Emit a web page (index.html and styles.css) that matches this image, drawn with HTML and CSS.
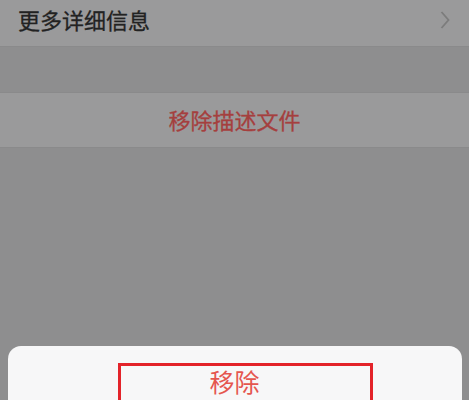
FILE: index.html
```html
<!DOCTYPE html>
<html lang="zh">
<head>
<meta charset="utf-8">
<link rel="stylesheet" href="styles.css">
</head>
<body>
<div class="page">
  <div class="row info">
    <span class="label">更多详细信息</span>
    <svg class="chev" width="10" height="20" viewBox="0 0 10 20"><polyline points="1.5,2 8.5,10 1.5,18" fill="none" stroke="#7c7c7c" stroke-width="1.8"/></svg>
  </div>
  <div class="gap"></div>
  <div class="row action"><span class="danger">移除描述文件</span></div>
  <div class="backdrop"></div>
  <div class="sheet">
    <div class="sheet-btn">移除</div>
    <div class="highlight"></div>
  </div>
</div>
</body>
</html>
```
FILE: styles.css
```css
html, body {
  margin: 0;
  padding: 0;
  background: #8e8e8f;
  font-family: "Noto Sans CJK SC", "Noto Sans", sans-serif;
}
.page {
  width: 469px;
  height: 400px;
  display: flex;
  flex-direction: column;
  overflow: hidden;
}
.row {
  background: #9a9a9b;
  display: flex;
  align-items: center;
}
.info {
  height: 47px;
  padding: 0 19px 0 18px;
  justify-content: space-between;
  align-items: flex-start;
  box-sizing: border-box;
  border-bottom: 1px solid #8a8a8b;
}
.label {
  font-size: 22px;
  line-height: 22px;
  margin-top: 8px;
  color: #222222;
  -webkit-text-stroke: 0.3px #222222;
}
.chev {
  margin-top: 10px;
}
.gap {
  height: 45px;
}
.action {
  height: 56px;
  box-sizing: border-box;
  border-top: 1px solid #8a8a8b;
  border-bottom: 1px solid #8a8a8b;
  justify-content: center;
}
.danger {
  font-size: 22px;
  line-height: 22px;
  color: #a53f3e;
  -webkit-text-stroke: 0.3px #a53f3e;
  margin-top: -2px;
}
.backdrop {
  flex: 1;
}
.sheet {
  flex: none;
  height: 54px;
  margin: 0 7px 0 8px;
  background: #f7f7f8;
  border-radius: 13px 13px 0 0;
  position: relative;
  box-sizing: border-box;
  padding-top: 23px;
}
.sheet-btn {
  text-align: center;
  font-size: 25px;
  line-height: 25px;
  color: #e5564f;
  margin-left: -8px;
  margin-right: -7px;
}
.highlight {
  position: absolute;
  left: 110px;
  top: 17px;
  width: 255px;
  height: 60px;
  box-sizing: border-box;
  border: 3px solid #e3232a;
}
```
